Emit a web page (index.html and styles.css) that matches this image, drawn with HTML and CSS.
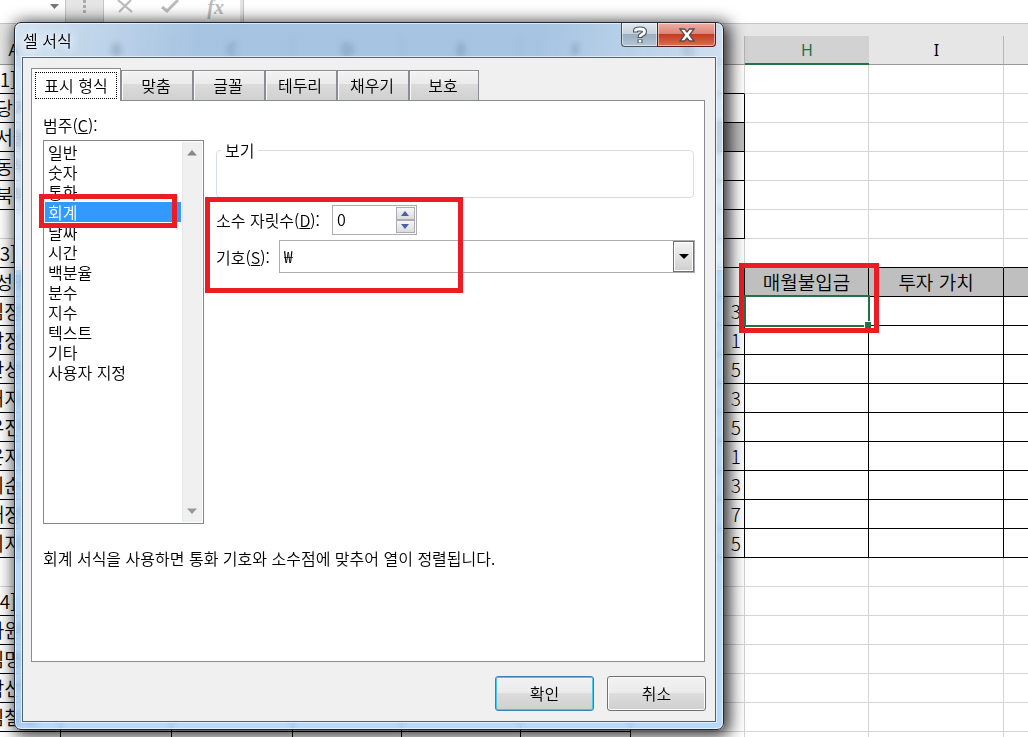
FILE: index.html
```html
<!DOCTYPE html>
<html lang="ko">
<head>
<meta charset="utf-8">
<title>셀 서식</title>
<link rel="stylesheet" href="styles.css">
</head>
<body>
<main class="workbook">
  <div class="formula-bar">
    <div class="name-box"><svg width="9" height="5" viewBox="0 0 9 5"><path d="M0 0h9L4.500 5z" fill="#777"/></svg></div>
    <div class="grip"><svg width="4" height="14" viewBox="0 0 4 14"><path d="M0 0h3v3H0zM0 5h3v3H0zM0 10h3v3H0z" fill="#aaa"/></svg></div>
    <div class="bar-tools">
      <svg width="16" height="14" viewBox="0 0 16 14"><path d="M1 0l14 12M14 0L2 12" stroke="#bcbcbc" stroke-width="2.200" fill="none"/></svg>
      <svg width="18" height="14" viewBox="0 0 18 14"><path d="M1 7l5 4L17 0" stroke="#bcbcbc" stroke-width="3" fill="none"/></svg>
      <span class="fx">fx</span>
    </div>
    <div class="formula-input"></div>
  </div>
  <table class="sheet">
    <colgroup><col class="ca"><col class="cb"><col class="cc"><col class="cd"><col class="ce"><col class="cf"><col class="cg"><col class="ch"><col class="ci"><col></colgroup>
    <thead><tr><th>A<th>B<th>C<th>D<th>E<th>F<th>G<th class="active">H<th>I<th></tr></thead>
    <tbody>
      <tr class="line-g"><td class="caption">[표1]<td><td><td><td><td><td><td><td><td></tr>
      <tr class="line-g box-g"><td>당지<td><td><td><td><td><td><td><td><td></tr>
      <tr class="line-g box-g"><td>서울<td class="fill"><td class="fill"><td class="fill"><td class="fill"><td class="fill"><td class="fill"><td><td><td></tr>
      <tr class="line-g box-g"><td>동부<td><td><td><td><td><td><td><td><td></tr>
      <tr class="line-g box-g"><td>북부<td><td><td><td><td><td><td><td><td></tr>
      <tr class="line-g box-g open-a"><td><td><td><td><td><td><td><td><td><td></tr>
      <tr class="line"><td class="caption">[표3]<td><td><td><td><td><td><td><td><td></tr>
      <tr class="line box"><td>성명<td><td><td><td><td><td><td class="fill">매월불입금<td class="fill">투자 가치<td class="fill"></tr>
      <tr class="line box"><td>김정우<td><td><td><td><td><td class="num">3<td class="selected"><span class="cursor"></span><span class="mark mark-cell"></span><td><td></tr>
      <tr class="line box"><td>박정호<td><td><td><td><td><td class="num">1<td><td><td></tr>
      <tr class="line box"><td>안성민<td><td><td><td><td><td class="num">5<td><td><td></tr>
      <tr class="line box"><td>허지수<td><td><td><td><td><td class="num">3<td><td><td></tr>
      <tr class="line box"><td>유진아<td><td><td><td><td><td class="num">5<td><td><td></tr>
      <tr class="line box"><td>은지원<td><td><td><td><td><td class="num">1<td><td><td></tr>
      <tr class="line box"><td>이순신<td><td><td><td><td><td class="num">3<td><td><td></tr>
      <tr class="line box"><td>채정안<td><td><td><td><td><td class="num">7<td><td><td></tr>
      <tr class="line box"><td>최지연<td><td><td><td><td><td class="num">5<td><td><td></tr>
      <tr><td><td><td><td><td><td><td><td><td><td></tr>
      <tr class="line-f"><td class="caption">[표4]<td><td><td><td><td><td><td><td><td></tr>
      <tr class="line-f box-f"><td>사원명<td><td><td><td><td><td><td><td><td></tr>
      <tr class="line-f box-f"><td>김명수<td><td><td><td><td><td><td><td><td></tr>
      <tr class="line-f box-f"><td>박선영<td><td><td><td><td><td><td><td><td></tr>
      <tr class="line-f box-f"><td>김철호<td><td><td><td><td><td><td><td><td></tr>
      <tr class="line-f box-f"><td><td><td><td><td><td><td><td><td><td></tr>
    </tbody>
  </table>
</main>

<section class="dialog" role="dialog" aria-labelledby="dialog-title">
  <header class="titlebar">
    <h1 id="dialog-title">셀 서식</h1>
    <div class="caption-buttons">
      <button type="button" class="help" aria-label="도움말"><svg width="16" height="20" viewBox="0 0 16 20"><path d="M3.500 7.500V5.500Q3.500 4 8 4t4.500 2.500q0 2-2.500 3-2 1-2 3.500M8 14.500V18" fill="none" stroke="#4c5560" stroke-width="5"/><path d="M3.500 6.500V5.500Q3.500 4 8 4t4.500 2.500q0 2-2.500 3-2 1-2 2.500M8 15V17.500" fill="none" stroke="#fff" stroke-width="2.800"/></svg></button>
      <button type="button" class="close" aria-label="닫기"><svg width="16" height="14" viewBox="0 0 16 14"><path d="M1 1h4.500L8 4l2.500-3H15l-4.500 6 4.500 6h-4.500L8 10l-2.500 3H1l4.500-6z" fill="#fff" stroke="#5c4a50" stroke-width="1.300"/></svg></button>
    </div>
  </header>
  <div class="client">
    <div class="tabs" role="tablist">
      <button type="button" role="tab" aria-selected="true" class="tab current"><span>표시 형식</span></button>
      <button type="button" role="tab" class="tab">맞춤</button>
      <button type="button" role="tab" class="tab">글꼴</button>
      <button type="button" role="tab" class="tab">테두리</button>
      <button type="button" role="tab" class="tab">채우기</button>
      <button type="button" role="tab" class="tab last">보호</button>
    </div>
    <div class="panel">
      <label class="list-label" for="category">범주(<u>C</u>):</label>
      <div class="columns">
        <div class="listbox">
          <select id="category" size="12">
            <option>일반</option><option>숫자</option><option>통화</option><option selected>회계</option><option>날짜</option><option>시간</option><option>백분율</option><option>분수</option><option>지수</option><option>텍스트</option><option>기타</option><option>사용자 지정</option>
          </select>
          <div class="scrollbar">
            <svg width="10" height="6" viewBox="0 0 10 6"><path d="M0 5.500L5 0l5 5.500z" fill="#888"/></svg>
            <svg width="10" height="6" viewBox="0 0 10 6"><path d="M0 .5h10L5 6z" fill="#999"/></svg>
          </div>
          <span class="mark mark-list"></span>
        </div>
        <div class="options">
          <fieldset class="preview"><legend>보기</legend></fieldset>
          <div class="field">
            <label for="decimals">소수 자릿수(<u>D</u>):</label>
            <div class="spinner">
              <input id="decimals" type="text" value="0">
              <div class="steps">
                <button type="button" aria-label="늘리기"><svg width="8" height="5" viewBox="0 0 8 5"><path d="M0 5l4-5 4 5z" fill="#4a5fa8"/></svg></button>
                <button type="button" aria-label="줄이기"><svg width="8" height="5" viewBox="0 0 8 5"><path d="M0 0h8L4 5z" fill="#4a5fa8"/></svg></button>
              </div>
            </div>
          </div>
          <div class="field symbol">
            <label for="symbol">기호(<u>S</u>):</label>
            <div class="combo">
              <select id="symbol"><option>₩</option></select>
              <span class="drop"><svg width="10" height="5" viewBox="0 0 10 5"><path d="M0 0h10L5 5z" fill="#000"/></svg></span>
            </div>
          </div>
          <span class="mark mark-options"></span>
        </div>
      </div>
      <p class="hint">회계 서식을 사용하면 통화 기호와 소수점에 맞추어 열이 정렬됩니다.</p>
    </div>
    <footer class="actions">
      <button type="button" class="push primary">확인</button>
      <button type="button" class="push">취소</button>
    </footer>
  </div>
</section>
</body>
</html>
```
FILE: styles.css
```css
* { box-sizing: border-box; }
body {
  margin: 0;
  height: 100vh;
  overflow: hidden;
  position: relative;
  background: #fff;
  color: #000;
  font: 350 16px/20px "Noto Sans CJK KR", sans-serif;
}
button, input, select { font: inherit; color: inherit; margin: 0; }
svg { display: block; }

/* Worksheet */
.workbook { height: 100vh; overflow: hidden; }
.formula-bar { display: flex; height: 24px; background: #e6e6e6; border-bottom: 1px solid #c6c6c6; }
.formula-bar > div { background: #fff; }
.name-box { width: 65px; padding: 4px 0 0 50px; }
.formula-bar .grip { width: 39px; padding-left: 17px; background: #e6e6e6; border: solid #c6c6c6; border-width: 0 1px; }
.bar-tools { width: 136px; display: flex; align-items: flex-start; justify-content: space-between; padding: 0 16px 0 13px; }
.fx { font: italic 700 20px/14px "Liberation Serif", serif; color: #bcbcbc; }
.formula-bar .formula-input { flex: 1; margin-left: 3px; border-left: 1px solid #c6c6c6; }

.sheet {
  width: calc(100% + 36px);
  margin-left: -34px;
  table-layout: fixed;
  border-collapse: separate;
  border-spacing: 0;
  font-size: 19px;
  line-height: 28px;
}
.ca { width: 95px; } .cb { width: 111px; } .cc { width: 121px; } .cd { width: 109px; } .ce { width: 119px; }
.cf { width: 110px; } .cg { width: 114px; } .ch { width: 124px; } .ci { width: 135px; }
.sheet thead th {
  height: 41px;
  padding: 12px 0 0;
  border-bottom: 1px solid #999;
  background: linear-gradient(#b5b5b5, #b5b5b5) right bottom / 1px 28px no-repeat #e6e6e6;
  font: 400 16px/26px "Noto Sans", sans-serif;
}
.sheet thead .active {
  border-bottom: 2px solid #217346;
  background: linear-gradient(#e6e6e6 12px, #d2d2d2 12px);
  color: #217346;
}
.sheet td {
  height: 29px;
  padding: 0;
  border: solid #d4d4d4;
  border-width: 0 1px 1px 0;
  text-align: center;
  white-space: nowrap;
}
.sheet .caption { text-align: left; padding-left: 10px; }
.sheet .num { padding-right: 3px; text-align: right; font-weight: 300; }
.sheet .fill { background: #bfbfbf; }
.line td, .line-g td:nth-child(-n+7), .line-f td:nth-child(-n+6) { border-bottom-color: #000; }
.box td, .box-g td:nth-child(-n+7), .box-f td:nth-child(-n+6) { border-right-color: #000; }
.line-g.open-a td:first-child { border-bottom-color: #d4d4d4; }
.selected { position: relative; }
.cursor { position: absolute; inset: -2px -2px -2px -1px; border: 2px solid #217346; }
.cursor::after { content: ""; position: absolute; right: -3px; bottom: -3px; width: 6px; height: 6px; background: #217346; border: solid #fff; border-width: 1px 0 0 1px; }

/* Red callouts */
.mark { position: absolute; border: 5px solid #ed1c24; pointer-events: none; }
.mark-cell { inset: -34px -11px -8px -6px; }
.mark-list { left: -5px; top: 53px; width: 138px; height: 34px; }
.mark-options { left: -11px; top: 57px; width: 258px; height: 96px; }

/* Dialog window */
.dialog {
  position: absolute;
  left: 14px;
  top: 22px;
  width: 710px;
  padding: 0 7px 7px;
  border: 1px solid #1f2a36;
  border-radius: 7px;
  background: linear-gradient(100deg, rgba(206, 226, 246, .7), rgba(136, 180, 224, .68) 26%, rgba(136, 180, 224, .68) 74%, rgba(196, 220, 244, .7)) 0 0 / 100% 35px no-repeat,
    linear-gradient(rgba(190, 215, 240, .7), rgba(205, 229, 253, .7) 30%, rgba(160, 205, 250, .76) 30%) 0 35px no-repeat;
  backdrop-filter: blur(3px);
  box-shadow: inset 0 0 0 1px rgba(255, 255, 255, .65), 3px 3px 16px 3px rgba(0, 0, 0, .8);
}
.titlebar { display: flex; justify-content: space-between; height: 34px; }
.titlebar h1 { margin: 0; padding-left: 1px; font: inherit; line-height: 34px; text-shadow: 0 0 8px #fff, 0 0 8px #fff; }
.caption-buttons { display: flex; height: 24px; }
.caption-buttons button { display: grid; place-items: center; padding: 0; border: 1px solid #46535f; border-top: 0; box-shadow: inset 0 0 0 1px rgba(255, 255, 255, .5); }
.caption-buttons .help { width: 36px; border-right: 0; border-radius: 0 0 0 4px; background: linear-gradient(#dfe8f0, #c4d0dc 50%, #9badbe 50%, #b5c6d6); }
.caption-buttons .close { width: 59px; border-color: #5a1c18; border-radius: 0 0 4px 0; background: linear-gradient(#eeb0a6, #dc7f70 50%, #c23b22 50%, #d8704f); }
.client {
  padding: 10px 10px 10px 8px;
  border: 1px solid #56636f;
  background: #f0f0f0;
  box-shadow: 0 0 0 1px rgba(255, 255, 255, .6);
}

/* Tabs */
.tabs { display: flex; align-items: flex-end; }
.tab {
  width: 72px;
  height: 30px;
  padding: 0 2px 1px 0;
  border: 1px solid #898c95;
  border-bottom: 0;
  background: linear-gradient(#f2f2f2, #ebebeb 45%, #dcdcdc 45%, #d0d0d0);
  box-shadow: inset 1px 1px 0 #fafafa;
}
.tab.last { width: 70px; }
.tab.current { width: 90px; height: 33px; margin-bottom: -1px; padding: 3px; background: #fff; position: relative; }
.current span { display: block; height: 27px; border: 1px dotted #000; line-height: 24px; white-space: nowrap; }
.panel { padding: 14px 10px 92px 11px; border: 1px solid #898c95; background: #fff; }
.list-label { display: block; margin-bottom: 5px; }
.columns { display: flex; gap: 12px; }

/* Category list */
.listbox { position: relative; flex: 0 0 161px; display: flex; height: 384px; border: 1px solid #828790; padding: 1px; }
.listbox select { flex: 1; width: 100%; height: 380px; padding: 0; border: 0; outline: 0; background: #fff; overflow: hidden; scrollbar-width: none; }
.listbox option { height: 20px; min-height: 0; padding: 0 3px; font-weight: 350; line-height: 20px; display: flex; align-items: center; }
.listbox option:checked { background: linear-gradient(#3399ff, #3399ff); color: #fff; }
.scrollbar { width: 20px; margin-left: 1px; padding: 8px 0 8px 4px; display: flex; flex-direction: column; justify-content: space-between; background: #f0f0f0; border-left: 1px solid #e6e6e6; }

/* Number options */
.options { position: relative; flex: 1; min-width: 0; }
.preview { height: 58px; margin: 0 0 7px; padding: 0 4px; border: 1px solid #d5dfe5; border-radius: 4px; }
.preview legend { padding: 0 4px; }
.field { display: flex; align-items: center; gap: 12px; margin-bottom: 5px; }
.symbol { margin-right: -1px; gap: 9px; }
.spinner { display: flex; width: 85px; height: 30px; padding: 1px; border: 1px solid #abadb3; background: #fff; }
.spinner input { flex: 1; width: 0; padding: 0 3px 2px; border: 0; outline: 0; background: none; }
.steps { width: 19px; display: flex; flex-direction: column; }
.steps button { flex: 1; display: grid; place-items: center; padding: 0; border: 1px solid #abadb3; background: linear-gradient(#f6f6f6, #dcdcdc); }
.combo { position: relative; flex: 1; height: 33px; }
.combo select { width: 100%; height: 33px; padding: 0 4px 2px; border: 1px solid #abadb3; border-radius: 0; appearance: none; background: #fff; font-weight: 400; }
.drop { position: absolute; top: 1px; right: 1px; bottom: 1px; width: 21px; display: grid; place-items: center; border: 1px solid #707070; background: linear-gradient(#f4f4f4, #cfcfcf); box-shadow: inset 0 0 0 1px #fff; pointer-events: none; }
.hint { margin: 24px 0 1px; }

/* Dialog buttons */
.actions { display: flex; justify-content: flex-end; gap: 13px; margin: 14px -1px 0 0; }
.push { width: 99px; height: 35px; padding: 0 0 2px; border: 1px solid #707070; border-radius: 3px; background: linear-gradient(#f2f2f2, #ebebeb 48%, #dddddd 48%, #cfcfcf); box-shadow: inset 0 0 0 1px #fcfcfc; }
.primary { border-color: #3c7fb1; box-shadow: inset 0 0 0 1px #48c8f0; }
```
